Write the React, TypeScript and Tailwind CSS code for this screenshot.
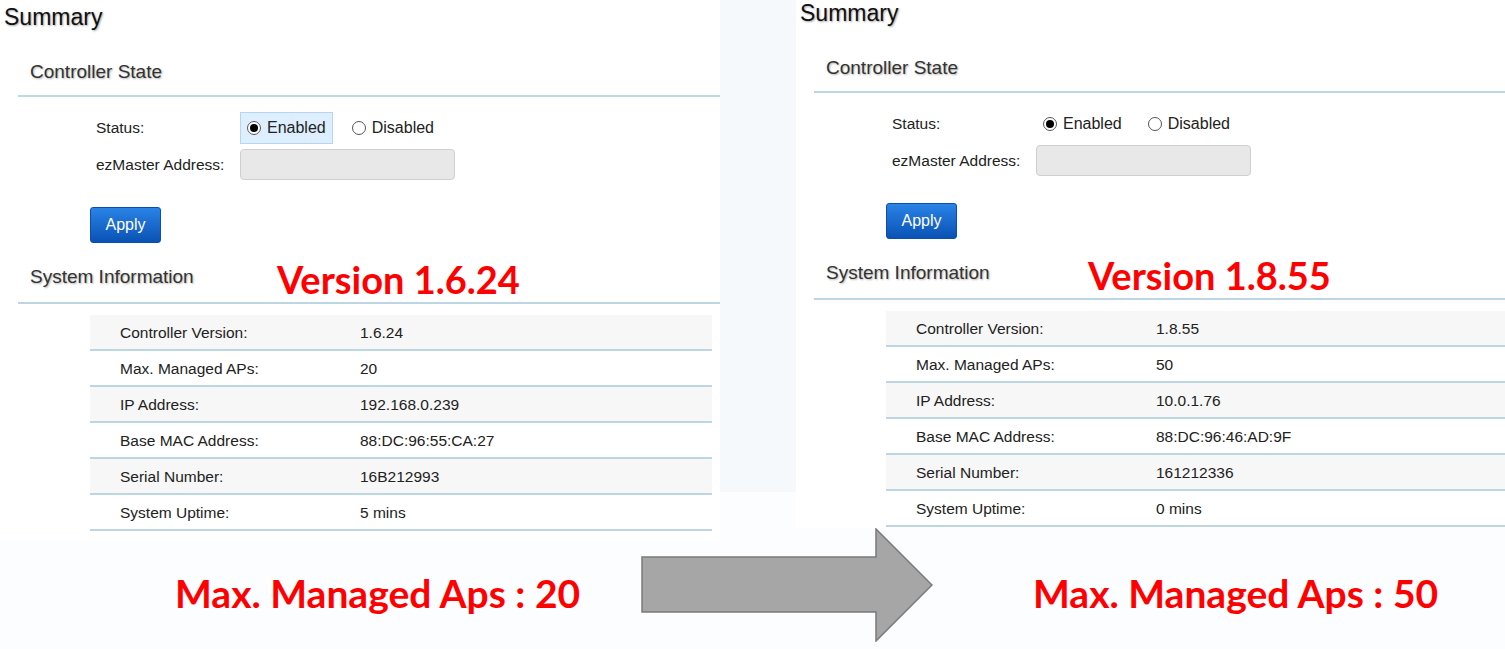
import React from 'react';

interface PanelData {
  version: string;
  maxAps: string;
  ip: string;
  mac: string;
  serial: string;
  uptime: string;
  highlight: boolean;
}

const left: PanelData = {
  version: '1.6.24',
  maxAps: '20',
  ip: '192.168.0.239',
  mac: '88:DC:96:55:CA:27',
  serial: '16B212993',
  uptime: '5 mins',
  highlight: true,
};

const right: PanelData = {
  version: '1.8.55',
  maxAps: '50',
  ip: '10.0.1.76',
  mac: '88:DC:96:46:AD:9F',
  serial: '161212336',
  uptime: '0 mins',
  highlight: false,
};

const ui = { fontFamily: '"Liberation Sans", Arial, sans-serif' };
const red = { fontFamily: 'Lato, "Open Sans", sans-serif' };

function Radio({ checked }: { checked: boolean }) {
  return (
    <span className="flex h-[14px] w-[14px] items-center justify-center rounded-full border border-[#555] bg-white">
      {checked && <span className="h-[8px] w-[8px] rounded-full bg-black" />}
    </span>
  );
}

function Panel({ d, isRight }: { d: PanelData; isRight?: boolean }) {
  const rows = [
    ['Controller Version:', d.version],
    ['Max. Managed APs:', d.maxAps],
    ['IP Address:', d.ip],
    ['Base MAC Address:', d.mac],
    ['Serial Number:', d.serial],
    ['System Uptime:', d.uptime],
  ];
  return (
    <div
      className={`bg-white text-[#222] ${isRight ? 'w-[709px] h-[532px] -mt-[4px]' : 'w-[720px] h-[540px] pr-[8px]'}`}
      style={ui}
    >
      <div className="pt-[3px] pl-[4px] text-[23px] leading-[28px] text-[#111] [text-shadow:1px_1px_2px_rgba(0,0,0,0.35)]">
        Summary
      </div>
      <div className="mt-[29px] pl-[30px] text-[19px] leading-[24px] text-[#333] [text-shadow:1px_1px_2px_rgba(0,0,0,0.3)]">
        Controller State
      </div>
      <div className={`mt-[11px] ml-[18px] h-[2px] bg-[#bcd6e4] ${isRight ? '' : '-mr-[8px]'}`} />

      <div className="pl-[96px] text-[15.5px]">
        <div className="mt-[15px] flex h-[32px] items-center">
          <span className="w-[144px]">Status:</span>
          <span
            className={`flex h-[32px] items-center gap-[6px] pr-[6px] text-[16px] ${
              d.highlight ? 'border border-[#b5d5f2] bg-[#ddeeff] pl-[6px]' : 'pl-[7px]'
            }`}
          >
            <Radio checked />
            Enabled
          </span>
          <span className={`flex items-center gap-[6px] text-[16px] ${d.highlight ? 'ml-[19px]' : 'ml-[20px]'}`}>
            <Radio checked={false} />
            Disabled
          </span>
        </div>
        <div className="mt-[5px] flex h-[31px] items-center">
          <span className="w-[144px]">ezMaster Address:</span>
          <span className="h-[31px] w-[215px] rounded-[4px] border border-[#cfcfcf] bg-[#e8e8e8]" />
        </div>
      </div>

      <button className="mt-[27px] ml-[90px] h-[36px] w-[71px] rounded-[3px] border border-[#0b4fa8] bg-gradient-to-b from-[#2a83e6] to-[#0a52b5] text-[16px] text-white">
        Apply
      </button>

      <div className="mt-[14px] flex h-[44px] items-center">
        <span
          className={`mb-[4px] pl-[30px] text-[19px] leading-[24px] text-[#333] [text-shadow:1px_1px_2px_rgba(0,0,0,0.3)] ${
            isRight ? 'w-[292px]' : 'w-[277px]'
          }`}
        >
          System Information
        </span>
        <span className="text-[38px] leading-[44px] font-bold text-[#ff0000]" style={red}>
          Version {d.version}
        </span>
      </div>
      <div className={`mt-[1px] ml-[18px] h-[2px] bg-[#bcd6e4] ${isRight ? '' : '-mr-[8px]'}`} />

      <div className="mt-[11px] ml-[90px] text-[15.5px]">
        {rows.map(([k, v], i) => (
          <div
            key={k}
            className={`flex h-[36px] items-center border-b-2 border-[#bcd6e4] pt-[2px] ${i % 2 === 0 ? 'bg-[#f7f7f7]' : 'bg-white'}`}
          >
            <span className="w-[270px] pl-[30px]">{k}</span>
            <span>{v}</span>
          </div>
        ))}
      </div>
    </div>
  );
}

export default function App() {
  return (
    <div className="h-[649px] w-[1505px] overflow-hidden bg-[#fcfdfe]">
      <div className="flex items-start">
        <Panel d={left} />
        <div className="h-[492px] w-[76px] bg-[#f6f9fc]" />
        <Panel d={right} isRight />
      </div>

      <div className="relative -mt-[12px] flex items-start">
        <div className="w-[641px] pl-[175px] pt-[42px] text-[39px] leading-[46px] font-bold text-[#ff0000]" style={red}>
          Max. Managed Aps : {left.maxAps}
        </div>
        <svg width="292" height="114" viewBox="0 0 292 114" className="shrink-0">
          <polygon
            points="1,29 235,29 235,1 291,57 235,113 235,84 1,84"
            fill="#a6a6a6"
            stroke="#7a7a7a"
            strokeWidth="1.5"
          />
        </svg>
        <div className="pl-[100px] pt-[42px] text-[39px] leading-[46px] font-bold text-[#ff0000]" style={red}>
          Max. Managed Aps : {right.maxAps}
        </div>
      </div>
    </div>
  );
}
